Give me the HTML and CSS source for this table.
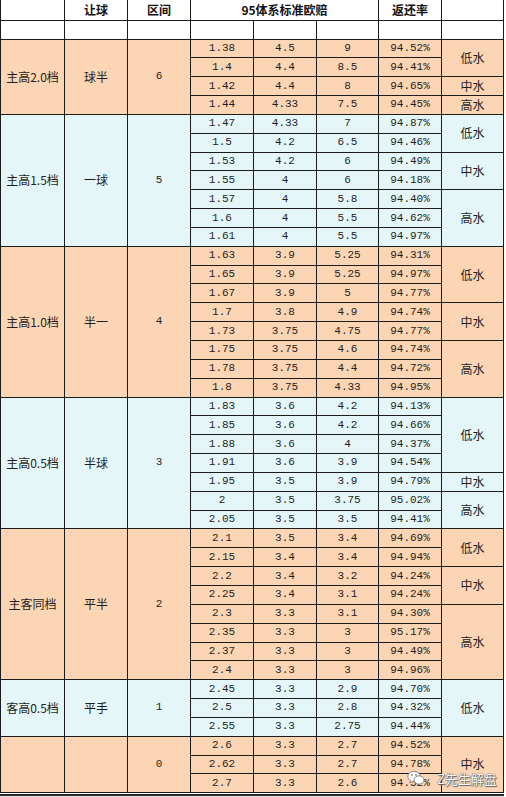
FILE: index.html
```html
<!DOCTYPE html>
<html lang="zh">
<head>
<meta charset="utf-8">
<link rel="stylesheet" href="styles.css">
</head>
<body>
<div class="page">
<table class="sheet">
<colgroup>
<col class="c1"><col class="c2"><col class="c3"><col class="c4"><col class="c5"><col class="c6"><col class="c7"><col class="c8">
</colgroup>
<tr class="head">
<td></td><th>让球</th><th>区间</th><th colspan="3">95体系标准欧赔</th><th>返还率</th><td></td>
</tr>
<tr class="blank"><td></td><td></td><td></td><td></td><td></td><td></td><td></td><td></td></tr>

<tr class="d o"><td class="cj" rowspan="4">主高2.0档</td><td class="cj" rowspan="4">球半</td><td class="n" rowspan="4">6</td><td class="n">1.38</td><td class="n">4.5</td><td class="n">9</td><td class="n">94.52%</td><td class="cj" rowspan="2">低水</td></tr>
<tr class="d o"><td class="n">1.4</td><td class="n">4.4</td><td class="n">8.5</td><td class="n">94.41%</td></tr>
<tr class="d o"><td class="n">1.42</td><td class="n">4.4</td><td class="n">8</td><td class="n">94.65%</td><td class="cj">中水</td></tr>
<tr class="d o"><td class="n">1.44</td><td class="n">4.33</td><td class="n">7.5</td><td class="n">94.45%</td><td class="cj">高水</td></tr>

<tr class="d b"><td class="cj" rowspan="7">主高1.5档</td><td class="cj" rowspan="7">一球</td><td class="n" rowspan="7">5</td><td class="n">1.47</td><td class="n">4.33</td><td class="n">7</td><td class="n">94.87%</td><td class="cj" rowspan="2">低水</td></tr>
<tr class="d b"><td class="n">1.5</td><td class="n">4.2</td><td class="n">6.5</td><td class="n">94.46%</td></tr>
<tr class="d b"><td class="n">1.53</td><td class="n">4.2</td><td class="n">6</td><td class="n">94.49%</td><td class="cj" rowspan="2">中水</td></tr>
<tr class="d b"><td class="n">1.55</td><td class="n">4</td><td class="n">6</td><td class="n">94.18%</td></tr>
<tr class="d b"><td class="n">1.57</td><td class="n">4</td><td class="n">5.8</td><td class="n">94.40%</td><td class="cj" rowspan="3">高水</td></tr>
<tr class="d b"><td class="n">1.6</td><td class="n">4</td><td class="n">5.5</td><td class="n">94.62%</td></tr>
<tr class="d b"><td class="n">1.61</td><td class="n">4</td><td class="n">5.5</td><td class="n">94.97%</td></tr>

<tr class="d o"><td class="cj" rowspan="8">主高1.0档</td><td class="cj" rowspan="8">半一</td><td class="n" rowspan="8">4</td><td class="n">1.63</td><td class="n">3.9</td><td class="n">5.25</td><td class="n">94.31%</td><td class="cj" rowspan="3">低水</td></tr>
<tr class="d o"><td class="n">1.65</td><td class="n">3.9</td><td class="n">5.25</td><td class="n">94.97%</td></tr>
<tr class="d o"><td class="n">1.67</td><td class="n">3.9</td><td class="n">5</td><td class="n">94.77%</td></tr>
<tr class="d o"><td class="n">1.7</td><td class="n">3.8</td><td class="n">4.9</td><td class="n">94.74%</td><td class="cj" rowspan="2">中水</td></tr>
<tr class="d o"><td class="n">1.73</td><td class="n">3.75</td><td class="n">4.75</td><td class="n">94.77%</td></tr>
<tr class="d o"><td class="n">1.75</td><td class="n">3.75</td><td class="n">4.6</td><td class="n">94.74%</td><td class="cj" rowspan="3">高水</td></tr>
<tr class="d o"><td class="n">1.78</td><td class="n">3.75</td><td class="n">4.4</td><td class="n">94.72%</td></tr>
<tr class="d o"><td class="n">1.8</td><td class="n">3.75</td><td class="n">4.33</td><td class="n">94.95%</td></tr>

<tr class="d b"><td class="cj" rowspan="7">主高0.5档</td><td class="cj" rowspan="7">半球</td><td class="n" rowspan="7">3</td><td class="n">1.83</td><td class="n">3.6</td><td class="n">4.2</td><td class="n">94.13%</td><td class="cj" rowspan="4">低水</td></tr>
<tr class="d b"><td class="n">1.85</td><td class="n">3.6</td><td class="n">4.2</td><td class="n">94.66%</td></tr>
<tr class="d b"><td class="n">1.88</td><td class="n">3.6</td><td class="n">4</td><td class="n">94.37%</td></tr>
<tr class="d b"><td class="n">1.91</td><td class="n">3.6</td><td class="n">3.9</td><td class="n">94.54%</td></tr>
<tr class="d b"><td class="n">1.95</td><td class="n">3.5</td><td class="n">3.9</td><td class="n">94.79%</td><td class="cj">中水</td></tr>
<tr class="d b"><td class="n">2</td><td class="n">3.5</td><td class="n">3.75</td><td class="n">95.02%</td><td class="cj" rowspan="2">高水</td></tr>
<tr class="d b"><td class="n">2.05</td><td class="n">3.5</td><td class="n">3.5</td><td class="n">94.41%</td></tr>

<tr class="d o"><td class="cj" rowspan="8">主客同档</td><td class="cj" rowspan="8">平半</td><td class="n" rowspan="8">2</td><td class="n">2.1</td><td class="n">3.5</td><td class="n">3.4</td><td class="n">94.69%</td><td class="cj" rowspan="2">低水</td></tr>
<tr class="d o"><td class="n">2.15</td><td class="n">3.4</td><td class="n">3.4</td><td class="n">94.94%</td></tr>
<tr class="d o"><td class="n">2.2</td><td class="n">3.4</td><td class="n">3.2</td><td class="n">94.24%</td><td class="cj" rowspan="2">中水</td></tr>
<tr class="d o"><td class="n">2.25</td><td class="n">3.4</td><td class="n">3.1</td><td class="n">94.24%</td></tr>
<tr class="d o"><td class="n">2.3</td><td class="n">3.3</td><td class="n">3.1</td><td class="n">94.30%</td><td class="cj" rowspan="4">高水</td></tr>
<tr class="d o"><td class="n">2.35</td><td class="n">3.3</td><td class="n">3</td><td class="n">95.17%</td></tr>
<tr class="d o"><td class="n">2.37</td><td class="n">3.3</td><td class="n">3</td><td class="n">94.49%</td></tr>
<tr class="d o"><td class="n">2.4</td><td class="n">3.3</td><td class="n">3</td><td class="n">94.96%</td></tr>

<tr class="d b"><td class="cj" rowspan="3">客高0.5档</td><td class="cj" rowspan="3">平手</td><td class="n" rowspan="3">1</td><td class="n">2.45</td><td class="n">3.3</td><td class="n">2.9</td><td class="n">94.70%</td><td class="cj" rowspan="3">低水</td></tr>
<tr class="d b"><td class="n">2.5</td><td class="n">3.3</td><td class="n">2.8</td><td class="n">94.32%</td></tr>
<tr class="d b"><td class="n">2.55</td><td class="n">3.3</td><td class="n">2.75</td><td class="n">94.44%</td></tr>

<tr class="d o"><td class="cj" rowspan="3"></td><td class="cj" rowspan="3"></td><td class="n" rowspan="3">0</td><td class="n">2.6</td><td class="n">3.3</td><td class="n">2.7</td><td class="n">94.52%</td><td class="cj" rowspan="3">中水</td></tr>
<tr class="d o"><td class="n">2.62</td><td class="n">3.3</td><td class="n">2.7</td><td class="n">94.78%</td></tr>
<tr class="d o"><td class="n">2.7</td><td class="n">3.3</td><td class="n">2.6</td><td class="n">94.52%</td></tr>
</table>
<div class="foot"></div>

<div class="mark">
<svg class="mark-icon" width="18" height="16" viewBox="0 0 18 16">
<ellipse cx="7" cy="6.5" rx="6.2" ry="5.2" fill="#fff" stroke="#888" stroke-width="1"/>
<path d="M3.5 10.5 L2.8 13 L6 11.4" fill="#fff" stroke="#888" stroke-width="1"/>
<ellipse cx="12" cy="10" rx="5" ry="4.2" fill="#fff" stroke="#888" stroke-width="1"/>
<circle cx="5" cy="5" r="0.9" fill="#888"/>
<circle cx="9" cy="5" r="0.9" fill="#888"/>
</svg>
<span class="mark-text">Z先生解盘</span>
</div>
</div>
</body>
</html>
```
FILE: styles.css
```css
html, body {
  margin: 0;
  padding: 0;
  background: #ffffff;
}
.page {
  position: relative;
  width: 506px;
  height: 797px;
  overflow: hidden;
}
.sheet {
  border-collapse: collapse;
  table-layout: fixed;
  width: 503px;
  color: #1e1e1e;
}
.c1 { width: 64px; }
.c2 { width: 63px; }
.c3 { width: 63px; }
.c4 { width: 63px; }
.c5 { width: 63px; }
.c6 { width: 62px; }
.c7 { width: 63px; }
.c8 { width: 62px; }
.sheet td, .sheet th {
  border: 1px solid #1c1c1c;
  padding: 0;
  text-align: center;
  vertical-align: middle;
  white-space: nowrap;
  overflow: hidden;
  line-height: 1;
}
.sheet tr.head td, .sheet tr.head th {
  border-top: none;
}
.sheet tr.head {
  height: 20px;
}
.sheet th {
  font: bold 12px "Noto Sans CJK SC", sans-serif;
  color: #111;
}
.sheet tr.blank {
  height: 19px;
}
.sheet tr.d {
  height: 18.85px;
}
.sheet tr.o td { background: #fcd5b4; }
.sheet tr.b td { background: #e4f6f8; }
.n {
  font: 11px "Liberation Mono", monospace;
}
.cj {
  font: 12px "Noto Sans CJK SC", sans-serif;
}
.foot {
  height: 4px;
  border-top: 2px solid #2a2a2a;
  background: #e8e8e8;
  margin-top: 1px;
  width: 504px;
}
.mark {
  position: absolute;
  left: 407px;
  top: 770px;
  display: flex;
  align-items: center;
  gap: 12px;
}
.mark-text {
  font: 13px "Noto Sans CJK SC", sans-serif;
  color: #fff;
  line-height: 1;
  text-shadow: 0 0 1px #555, 0 0 1px #555, 1px 1px 1px #666;
}
```
